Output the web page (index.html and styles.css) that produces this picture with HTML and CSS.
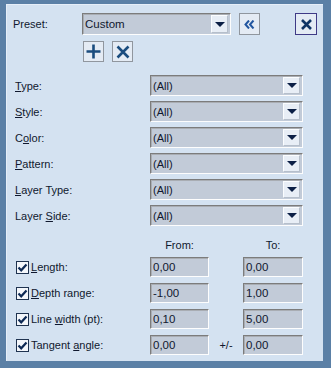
FILE: index.html
```html
<!DOCTYPE html>
<html>
<head>
<meta charset="utf-8">
<link rel="stylesheet" href="styles.css">
</head>
<body>
<div class="frame">
  <div class="panel">
    <div class="preset-row">
      <span class="lbl preset-lbl">Preset:</span>
      <div class="combo preset-combo">
        <span class="val">Custom</span>
        <span class="arrow"><svg width="10" height="5" viewBox="0 0 10 5"><path d="M0 0H10L5 5Z" fill="#0b1f45"/></svg></span>
      </div>
      <button class="btn btn-collapse"><svg width="11" height="9" viewBox="0 0 11 9"><path d="M5 0.5L1.5 4.5L5 8.5M9.5 0.5L6 4.5L9.5 8.5" fill="none" stroke="#2256a0" stroke-width="2"/></svg></button>
      <button class="btn btn-close"><svg width="11" height="11" viewBox="0 0 11 11"><path d="M1 1L10 10M10 1L1 10" stroke="#0d3466" stroke-width="2.6"/></svg></button>
    </div>
    <div class="tool-row">
      <button class="btn btn-tool"><svg width="15" height="15" viewBox="0 0 15 15"><path d="M7.5 0.5V14.5M0.5 7.5H14.5" stroke="#1a4c7e" stroke-width="2.6"/></svg></button>
      <button class="btn btn-tool"><svg width="14" height="14" viewBox="0 0 14 14"><path d="M1.5 1.5L12.5 12.5M12.5 1.5L1.5 12.5" stroke="#1a4c7e" stroke-width="2.6"/></svg></button>
    </div>
    <div class="filters">
      <span class="lbl"><u>T</u>ype:</span>
      <div class="combo"><span class="val">(All)</span><span class="arrow"><svg width="10" height="5" viewBox="0 0 10 5"><path d="M0 0H10L5 5Z" fill="#0b1f45"/></svg></span></div>
      <span class="lbl"><u>S</u>tyle:</span>
      <div class="combo"><span class="val">(All)</span><span class="arrow"><svg width="10" height="5" viewBox="0 0 10 5"><path d="M0 0H10L5 5Z" fill="#0b1f45"/></svg></span></div>
      <span class="lbl">C<u>o</u>lor:</span>
      <div class="combo"><span class="val">(All)</span><span class="arrow"><svg width="10" height="5" viewBox="0 0 10 5"><path d="M0 0H10L5 5Z" fill="#0b1f45"/></svg></span></div>
      <span class="lbl"><u>P</u>attern:</span>
      <div class="combo"><span class="val">(All)</span><span class="arrow"><svg width="10" height="5" viewBox="0 0 10 5"><path d="M0 0H10L5 5Z" fill="#0b1f45"/></svg></span></div>
      <span class="lbl"><u>L</u>ayer Type:</span>
      <div class="combo"><span class="val">(All)</span><span class="arrow"><svg width="10" height="5" viewBox="0 0 10 5"><path d="M0 0H10L5 5Z" fill="#0b1f45"/></svg></span></div>
      <span class="lbl">Layer <u>S</u>ide:</span>
      <div class="combo"><span class="val">(All)</span><span class="arrow"><svg width="10" height="5" viewBox="0 0 10 5"><path d="M0 0H10L5 5Z" fill="#0b1f45"/></svg></span></div>
    </div>
    <div class="ranges">
      <span></span><span class="hdr">From:</span><span></span><span class="hdr">To:</span>

      <label class="chk"><span class="box"><svg width="11" height="11" viewBox="0 0 11 11"><path d="M1.5 5.5L4.2 8.3L9.5 2.5" fill="none" stroke="#0e2a55" stroke-width="2.2"/></svg></span><span><u>L</u>ength:</span></label>
      <span class="inp">0,00</span><span></span><span class="inp">0,00</span>

      <label class="chk"><span class="box"><svg width="11" height="11" viewBox="0 0 11 11"><path d="M1.5 5.5L4.2 8.3L9.5 2.5" fill="none" stroke="#0e2a55" stroke-width="2.2"/></svg></span><span><u>D</u>epth range:</span></label>
      <span class="inp">-1,00</span><span></span><span class="inp">1,00</span>

      <label class="chk"><span class="box"><svg width="11" height="11" viewBox="0 0 11 11"><path d="M1.5 5.5L4.2 8.3L9.5 2.5" fill="none" stroke="#0e2a55" stroke-width="2.2"/></svg></span><span>Line <u>w</u>idth (pt):</span></label>
      <span class="inp">0,10</span><span></span><span class="inp">5,00</span>

      <label class="chk"><span class="box"><svg width="11" height="11" viewBox="0 0 11 11"><path d="M1.5 5.5L4.2 8.3L9.5 2.5" fill="none" stroke="#0e2a55" stroke-width="2.2"/></svg></span><span>Tangent <u>a</u>ngle:</span></label>
      <span class="inp">0,00</span><span class="pm">+/-</span><span class="inp">0,00</span>
    </div>
  </div>
</div>
</body>
</html>
```
FILE: styles.css
```css
html, body {
  margin: 0;
  padding: 0;
  background: #5b80a6;
}
body {
  font-family: "Liberation Sans", Arial, sans-serif;
  font-size: 11px;
  color: #10182e;
}
.frame {
  width: 331px;
  height: 368px;
  box-sizing: border-box;
  background: #d4e2f1;
  border-style: solid;
  border-color: #5b80a6;
  border-width: 4px 8px 7px 6px;
  border-top-left-radius: 6px;
  box-shadow: inset 1px 1px 0 #e6eef8;
}
.panel {
  padding: 9px 0 0 9px;
}
.lbl {
  white-space: nowrap;
}
.preset-row {
  display: flex;
  align-items: center;
  height: 22px;
}
.preset-lbl {
  margin-left: -2px;
  width: 69px;
}
.combo {
  box-sizing: border-box;
  height: 21px;
  display: flex;
  align-items: center;
  background: #c2cbd8;
  border: 1px solid;
  border-color: #7c7c7c #fdfdfd #fdfdfd #7c7c7c;
  box-shadow: inset 1px 1px 0 #a9adb3;
}
.preset-combo {
  width: 149px;
  height: 22px;
  font-size: 11.5px;
}
.val {
  flex: 1;
  padding-left: 2px;
}
.arrow {
  box-sizing: border-box;
  width: 17px;
  height: 17px;
  margin-right: 2px;
  background: #e8eef6;
  border: 1px solid;
  border-color: #fbfdff #b6bfcb #b6bfcb #fbfdff;
  display: flex;
  align-items: center;
  justify-content: center;
}
.preset-combo .arrow {
  height: 18px;
}
.btn {
  box-sizing: border-box;
  width: 21px;
  height: 22px;
  padding: 0;
  margin: 0;
  background: #e4ebf4;
  border: 1px solid #90969e;
  display: flex;
  align-items: center;
  justify-content: center;
}
.btn-collapse {
  margin-left: 8px;
}
.btn-close {
  width: 22px;
  margin-left: 35px;
  border-color: #3f3a86;
}
.tool-row {
  display: flex;
  gap: 8px;
  margin: 6px 0 0 68px;
}
.btn-tool {
  height: 21px;
}
.filters {
  margin-top: 13px;
  display: grid;
  grid-template-columns: 135px 153px;
  grid-auto-rows: 21px;
  row-gap: 5px;
  align-items: center;
}
.ranges {
  margin-top: 12px;
  display: grid;
  grid-template-columns: 135px 59px 34px 60px;
  grid-template-rows: 13px;
  grid-auto-rows: 20px;
  row-gap: 6px;
  align-items: center;
}
.hdr {
  text-align: center;
}
.pm {
  text-align: center;
}
.chk {
  display: flex;
  align-items: center;
  gap: 2px;
  margin-left: 1px;
  white-space: nowrap;
}
.box {
  box-sizing: border-box;
  width: 13px;
  height: 13px;
  background: #f4f7fb;
  border: 1px solid #1f3350;
  display: flex;
  align-items: center;
  justify-content: center;
}
.inp {
  box-sizing: border-box;
  height: 20px;
  padding-left: 2px;
  display: flex;
  align-items: center;
  background: #c2cbd8;
  border: 1px solid;
  border-color: #7c7c7c #fdfdfd #fdfdfd #7c7c7c;
  box-shadow: inset 1px 1px 0 #a9adb3;
  font-size: 11.5px;
}
```
